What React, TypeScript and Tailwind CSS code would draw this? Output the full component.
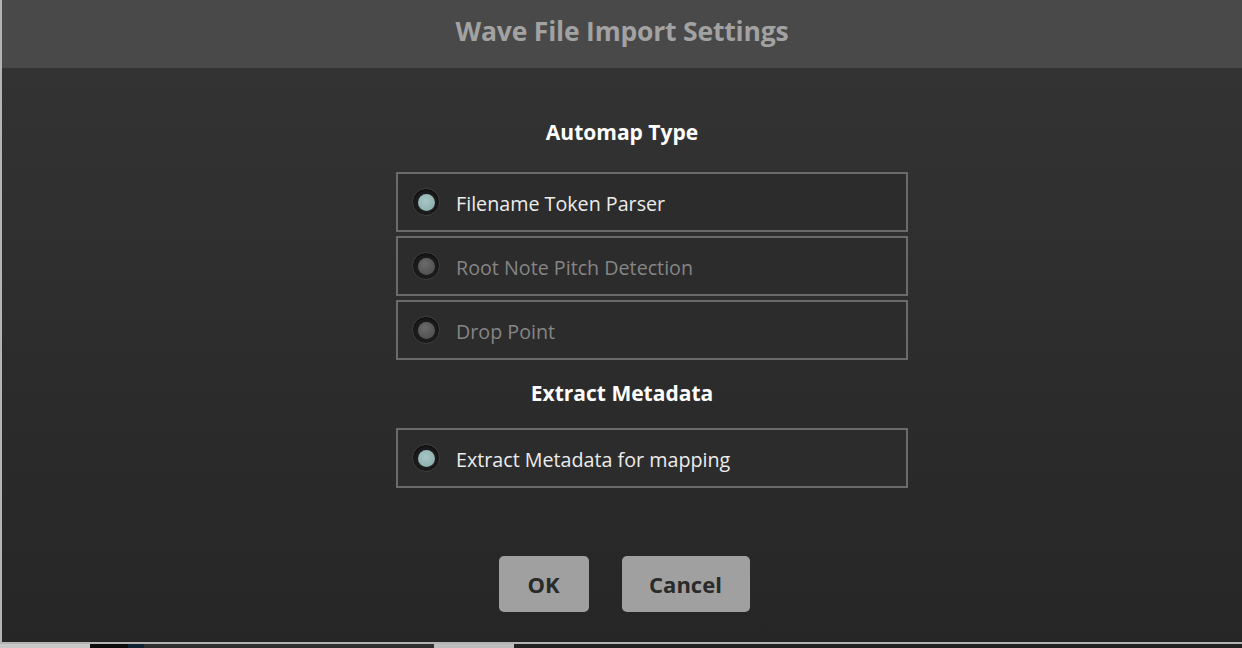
import React from 'react'

type Option = { label: string; selected: boolean }

const automapOptions: Option[] = [
  { label: 'Filename Token Parser', selected: true },
  { label: 'Root Note Pitch Detection', selected: false },
  { label: 'Drop Point', selected: false },
]

function Radio({ selected }: { selected: boolean }) {
  return (
    <div className="w-[28px] h-[28px] rounded-full bg-[#1c1c1c] border border-[#3e3e3e] shadow-[inset_0_1px_3px_rgba(0,0,0,0.8)] flex items-center justify-center shrink-0">
      {selected ? (
        <div className="w-[17px] h-[17px] rounded-full bg-[radial-gradient(circle_at_45%_40%,#a8c6c6,#86a6a6)]" />
      ) : (
        <div className="w-[17px] h-[17px] rounded-full bg-[radial-gradient(circle_at_40%_35%,#6a6a6a,#4a4a4a)]" />
      )}
    </div>
  )
}

function OptionRow({ label, selected }: Option) {
  return (
    <div className="h-[60px] border-2 border-[#6b6b6b] flex items-center pl-[14px] gap-[16px] bg-[#2c2c2c]">
      <Radio selected={selected} />
      <span className={`text-[19.7px] pt-[3px] ${selected ? 'text-[#ececec]' : 'text-[#858585]'}`}>{label}</span>
    </div>
  )
}

export default function App() {
  return (
    <div className="w-[1242px] h-[648px] flex flex-col bg-[#1a1a1a] font-['Open_Sans','Liberation_Sans',sans-serif] overflow-hidden">
      <div className="h-[644px] flex flex-col border-l-2 border-b-2 border-[#b4b4b4]">
        {/* header */}
        <div className="h-[68px] bg-[#494949] flex items-center justify-center shrink-0 pb-[4px]">
          <h1 className="text-[26.5px] font-bold text-[#a2a2a2] tracking-[-0.2px]">Wave File Import Settings</h1>
        </div>

        {/* body */}
        <div className="flex-1 flex flex-col bg-gradient-to-b from-[#333333] to-[#262626] pt-[50px]">
          <h2 className="text-[21px] leading-[28px] font-bold text-white text-center">Automap Type</h2>
          <div className="mt-[26px] ml-[394px] w-[512px] flex flex-col gap-[4px]">
            {automapOptions.map(o => (
              <OptionRow key={o.label} {...o} />
            ))}
          </div>

          <h2 className="mt-[19px] text-[21px] leading-[28px] font-bold text-white text-center">Extract Metadata</h2>
          <div className="mt-[21px] ml-[394px] w-[512px]">
            <OptionRow label="Extract Metadata for mapping" selected />
          </div>

          <div className="mt-[68px] ml-[4px] flex justify-center gap-[33px]">
            <button className="w-[90px] h-[56px] rounded-[5px] bg-[#a0a0a0] text-[#2a2a2a] text-[22px] font-bold">OK</button>
            <button className="w-[128px] h-[56px] rounded-[5px] bg-[#a0a0a0] text-[#2a2a2a] text-[22px] font-bold">Cancel</button>
          </div>
        </div>
      </div>

      {/* background app strip */}
      <div className="h-[4px] flex">
        <div className="w-[90px] bg-[#c8c8c8]" />
        <div className="w-[38px] bg-[#0c0c0c]" />
        <div className="w-[16px] bg-[#0e2230]" />
        <div className="w-[290px] bg-[#303030]" />
        <div className="w-[80px] bg-[#bdbdbd]" />
        <div className="flex-1 bg-[#222222]" />
      </div>
    </div>
  )
}
